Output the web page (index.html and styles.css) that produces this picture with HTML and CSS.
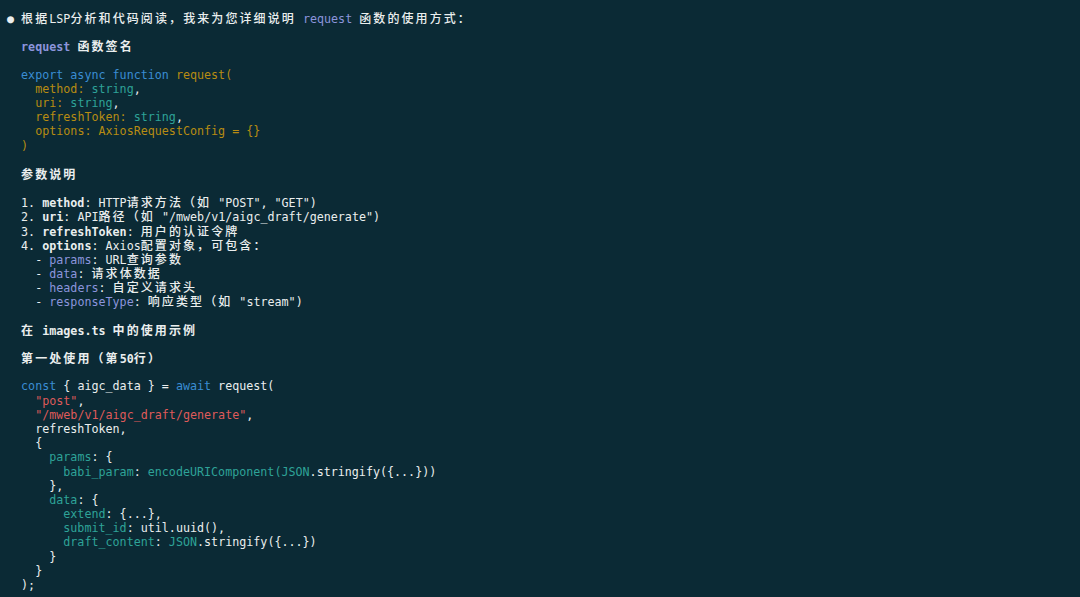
FILE: index.html
```html
<!DOCTYPE html>
<html lang="zh">
<head>
<meta charset="utf-8">
<title>request</title>
<link rel="stylesheet" href="styles.css">
</head>
<body>
<main class="term">
<div class="ln"><span class="dot">●</span> <span class="zh">根据</span>LSP<span class="zh">分析和代码阅读，我来为您详细说明</span> <span class="p">request</span> <span class="zh">函数的使用方式：</span></div>
<div class="ln"></div>
<div class="ln b">  <span class="p">request</span> <span class="zh">函数签名</span></div>
<div class="ln"></div>
<div class="ln">  <span class="k">export async function</span><span class="y"> request(</span></div>
<div class="ln">    <span class="y">method:</span><span class="t"> string</span>,</div>
<div class="ln">    <span class="y">uri:</span><span class="t"> string</span>,</div>
<div class="ln">    <span class="y">refreshToken:</span><span class="t"> string</span>,</div>
<div class="ln">    <span class="y">options: AxiosRequestConfig = {}</span></div>
<div class="ln">  <span class="y">)</span></div>
<div class="ln"></div>
<div class="ln b">  <span class="zh">参数说明</span></div>
<div class="ln"></div>
<div class="ln">  1. <b>method</b>: HTTP<span class="zh">请求方法（如</span> "POST", "GET")</div>
<div class="ln">  2. <b>uri</b>: API<span class="zh">路径（如</span> "/mweb/v1/aigc_draft/generate")</div>
<div class="ln">  3. <b>refreshToken</b>: <span class="zh">用户的认证令牌</span></div>
<div class="ln">  4. <b>options</b>: Axios<span class="zh">配置对象，可包含：</span></div>
<div class="ln">    - <span class="p">params</span>: URL<span class="zh">查询参数</span></div>
<div class="ln">    - <span class="p">data</span>: <span class="zh">请求体数据</span></div>
<div class="ln">    - <span class="p">headers</span>: <span class="zh">自定义请求头</span></div>
<div class="ln">    - <span class="p">responseType</span>: <span class="zh">响应类型（如</span> "stream")</div>
<div class="ln"></div>
<div class="ln b">  <span class="zh">在</span> images.ts <span class="zh">中的使用示例</span></div>
<div class="ln"></div>
<div class="ln b">  <span class="zh">第一处使用（第</span>50<span class="zh">行）</span></div>
<div class="ln"></div>
<div class="ln">  <span class="k">const</span> { aigc_data } = <span class="k">await</span> request(</div>
<div class="ln">    <span class="r">"post"</span>,</div>
<div class="ln">    <span class="r">"/mweb/v1/aigc_draft/generate"</span>,</div>
<div class="ln">    refreshToken,</div>
<div class="ln">    {</div>
<div class="ln">      <span class="t">params</span>: {</div>
<div class="ln">        <span class="t">babi_param</span>: <span class="t">encodeURIComponent(JSON</span>.stringify({...}))</div>
<div class="ln">      },</div>
<div class="ln">      <span class="t">data</span>: {</div>
<div class="ln">        <span class="t">extend</span>: {...},</div>
<div class="ln">        <span class="t">submit_id</span>: util.uuid(),</div>
<div class="ln">        <span class="t">draft_content</span>: <span class="t">JSON</span>.stringify({...})</div>
<div class="ln">      }</div>
<div class="ln">    }</div>
<div class="ln">  );</div>
</main>
</body>
</html>
```

FILE: styles.css
```css
html, body {
  margin: 0;
  padding: 0;
  background: #0b2a35;
  height: 100%;
}

.term {
  box-sizing: border-box;
  height: 597px;
  overflow: hidden;
  padding: 11px 0 0 7px;
  font-family: "DejaVu Sans Mono", "Liberation Mono", "Noto Sans CJK SC", monospace;
  font-size: 11.7px;
  color: #eaeeee;
}

.ln {
  height: 14.175px;
  line-height: 14.175px;
  white-space: pre;
}

.b, b {
  font-weight: bold;
}

.zh {
  font-family: "Noto Sans CJK SC", sans-serif;
  font-size: 12px;
  font-weight: 500;
  letter-spacing: 2.09px;
}

.b .zh {
  font-weight: bold;
}

.dot {
  font-size: 11.7px;
}

.p { color: #8c95dc; }
.k { color: #3a8dd3; }
.y { color: #b78c12; }
.t { color: #2ea398; }
.r { color: #df5a5a; }
```
